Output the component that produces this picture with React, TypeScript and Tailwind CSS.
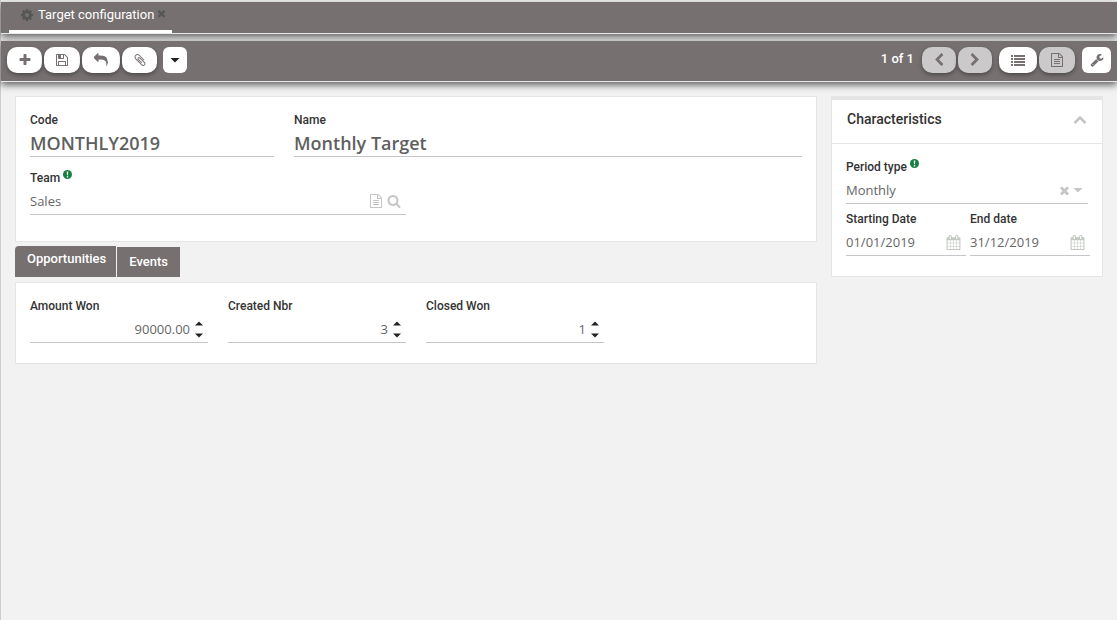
import React, { useState } from "react";

const paths = {
  cog: "M1152 896q0-106-75-181t-181-75-181 75-75 181 75 181 181 75 181-75 75-181zm512-109v222q0 12-8 23t-20 13l-185 28q-19 54-39 91 35 50 107 138 10 12 10 25t-9 23q-27 37-99 108t-94 71q-12 0-26-9l-138-108q-44 23-91 38-16 136-29 186-7 28-36 28h-222q-14 0-24.5-8.5t-11.5-21.5l-28-184q-49-16-90-37l-141 107q-10 9-25 9-14 0-25-11-126-114-165-168-7-10-7-23 0-12 8-23 15-21 51-66.5t54-70.5q-27-50-41-99l-183-27q-13-2-21-12.5t-8-23.5v-222q0-12 8-23t19-13l186-28q14-46 39-92-40-57-107-138-10-12-10-24 0-10 9-23 26-36 98.5-107.5t94.5-71.5q13 0 26 10l138 107q44-23 91-38 16-136 29-186 7-28 36-28h222q14 0 24.5 8.5t11.5 21.5l28 184q49 16 90 37l142-107q9-9 24-9 13 0 25 10 129 119 165 170 7 8 7 22 0 12-8 23-15 21-51 66.5t-54 70.5q26 50 41 98l183 28q13 2 21 12.5t8 23.5z",
  times: "M1490 1322q0 40-28 68l-136 136q-28 28-68 28t-68-28l-294-294-294 294q-28 28-68 28t-68-28l-136-136q-28-28-28-68t28-68l294-294-294-294q-28-28-28-68t28-68l136-136q28-28 68-28t68 28l294 294 294-294q28-28 68-28t68 28l136 136q28 28 28 68t-28 68l-294 294 294 294q28 28 28 68z",
  plus: "M1600 736v192q0 40-28 68t-68 28h-416v416q0 40-28 68t-68 28h-192q-40 0-68-28t-28-68v-416h-416q-40 0-68-28t-28-68v-192q0-40 28-68t68-28h416v-416q0-40 28-68t68-28h192q40 0 68 28t28 68v416h416q40 0 68 28t28 68z",
  save: "M512 1536h768v-384h-768v384zm896 0h128v-896q0-14-10-38.5t-20-34.5l-281-281q-10-10-34-20t-39-10v416q0 40-28 68t-68 28h-576q-40 0-68-28t-28-68v-416h-128v1280h128v-416q0-40 28-68t68-28h832q40 0 68 28t28 68v416zm-384-928v-320q0-13-9.5-22.5t-22.5-9.5h-192q-13 0-22.5 9.5t-9.5 22.5v320q0 13 9.5 22.5t22.5 9.5h192q13 0 22.5-9.5t9.5-22.5zm640 32v928q0 40-28 68t-68 28h-1344q-40 0-68-28t-28-68v-1344q0-40 28-68t68-28h928q40 0 88 20t76 48l280 280q28 28 48 76t20 88z",
  reply: "M1792 1120q0 166-127 451-3 7-10.5 24t-13.5 30-13 22q-12 17-28 17-15 0-23.5-10t-8.5-25q0-9 2.5-26.5t2.5-23.5q5-68 5-123 0-112-19.5-200.5t-54-153-89-111.5-117-77-145.5-48-166.5-25.5-186.5-7.5h-224v256q0 26-19 45t-45 19-45-19l-512-512q-19-19-19-45t19-45l512-512q19-19 45-19t45 19 19 45v256h224q713 0 875 403 53 134 53 333z",
  clip: "M1596 1385q0 117-79 196t-196 79q-135 0-235-100l-777-776q-113-115-113-271 0-159 110-270t269-111q158 0 273 113l605 606q10 10 10 22 0 16-30.5 46.5t-46.5 30.5q-13 0-23-10l-606-607q-79-77-181-77-106 0-179 75t-73 181q0 105 76 181l776 777q63 63 145 63 64 0 106-42t42-106q0-82-63-145l-581-581q-26-24-60-24-29 0-48 19t-19 48q0 32 25 59l410 410q10 10 10 22 0 16-31 47t-47 31q-12 0-22-10l-410-410q-63-61-63-149 0-82 57-139t139-57q88 0 149 63l581 581q100 98 100 235z",
  left: "M1427 301l-531 531 531 531q19 19 19 45t-19 45l-166 166q-19 19-45 19t-45-19l-742-742q-19-19-19-45t19-45l742-742q19-19 45-19t45 19l166 166q19 19 19 45t-19 45z",
  right: "M1363 877l-742 742q-19 19-45 19t-45-19l-166-166q-19-19-19-45t19-45l531-531-531-531q-19-19-19-45t19-45l166-166q19-19 45-19t45 19l742 742q19 19 19 45t-19 45z",
  up: "M1683 1331l-166 165q-19 19-45 19t-45-19l-531-531-531 531q-19 19-45 19t-45-19l-166-165q-19-19-19-45.5t19-45.5l742-741q19-19 45-19t45 19l742 741q19 19 19 45.5t-19 45.5z",
  list: "M0 256h256v240H0zM384 256h1408v240H384zM0 640h256v240H0zM384 640h1408v240H384zM0 1024h256v240H0zM384 1024h1408v240H384zM0 1408h256v240H0zM384 1408h1408v240H384z",
  file: "M1596 380q28 28 48 76t20 88v1152q0 40-28 68t-68 28h-1344q-40 0-68-28t-28-68v-1600q0-40 28-68t68-28h896q40 0 88 20t76 48zm-444-244v376h376q-10-29-22-41l-313-313q-12-12-41-22zm384 1528v-1024h-416q-40 0-68-28t-28-68v-416h-768v1536h1280zm-1024-864q0-14 9-23t23-9h704q14 0 23 9t9 23v64q0 14-9 23t-23 9h-704q-14 0-23-9t-9-23v-64zm736 224q14 0 23 9t9 23v64q0 14-9 23t-23 9h-704q-14 0-23-9t-9-23v-64q0-14 9-23t23-9h704zm0 256q14 0 23 9t9 23v64q0 14-9 23t-23 9h-704q-14 0-23-9t-9-23v-64q0-14 9-23t23-9h704z",
  wrench: "M448 1472q0-26-19-45t-45-19-45 19-19 45 19 45 45 19 45-19 19-45zm644-420l-682 682q-37 37-90 37-52 0-91-37l-106-108q-38-36-38-90 0-53 38-91l681-681q39 98 114.5 173.5t173.5 114.5zm634-435q0 39-23 106-47 134-164.5 217.5t-258.5 83.5q-185 0-316.5-131.5t-131.5-316.5 131.5-316.5 316.5-131.5q58 0 121.5 16.5t107.5 46.5q16 11 16 28t-16 28l-293 169v224l193 107q5-3 79-48.5t135.5-81 70.5-35.5q15 0 23.5 10t8.5 25z",
  search: "M1216 832q0-185-131.5-316.5t-316.5-131.5-316.5 131.5-131.5 316.5 131.5 316.5 316.5 131.5 316.5-131.5 131.5-316.5zm512 832q0 52-38 90t-90 38q-54 0-90-38l-343-342q-179 124-399 124-143 0-273.5-55.5t-225-150-150-225-55.5-273.5 55.5-273.5 150-225 225-150 273.5-55.5 273.5 55.5 225 150 150 225 55.5 273.5q0 220-124 399l343 343q37 37 37 90z",
  calendar: "M192 1664h288v-288h-288v288zm352 0h320v-288h-320v288zm-352-352h288v-320h-288v320zm352 0h320v-320h-320v320zm-352-384h288v-288h-288v288zm736 736h320v-288h-320v288zm-384-736h320v-288h-320v288zm768 736h288v-288h-288v288zm-384-352h320v-320h-320v320zm-352-864v-288q0-13-9.5-22.5t-22.5-9.5h-64q-13 0-22.5 9.5t-9.5 22.5v288q0 13 9.5 22.5t22.5 9.5h64q13 0 22.5-9.5t9.5-22.5zm736 864h288v-320h-288v320zm-384-384h320v-288h-320v288zm384 0h288v-288h-288v288zm32-480v-288q0-13-9.5-22.5t-22.5-9.5h-64q-13 0-22.5 9.5t-9.5 22.5v288q0 13 9.5 22.5t22.5 9.5h64q13 0 22.5-9.5t9.5-22.5zm384-64v1280q0 52-38 90t-90 38h-1408q-52 0-90-38t-38-90v-1280q0-52 38-90t90-38h128v-96q0-66 47-113t113-47h64q66 0 113 47t47 113v96h384v-96q0-66 47-113t113-47h64q66 0 113 47t47 113v96h128q52 0 90 38t38 90z",
  caret: "M320 640h1152l-576 576z",
};

function Icon({ name, className }: { name: keyof typeof paths; className: string }) {
  return (
    <svg viewBox="0 0 1792 1792" fill="currentColor" aria-hidden="true" className={`shrink-0 ${className}`}>
      <path d={paths[name]} />
    </svg>
  );
}

function Required() {
  return (
    <svg viewBox="0 0 12 12" aria-hidden="true" className="h-[9px] w-[9px] shrink-0">
      <circle cx="6" cy="6" r="6" fill="#15803f" />
      <path d="M5 2h2l-.3 5H5.300zM5.100 8h1.800v2H5.100z" fill="#fff" />
    </svg>
  );
}

const label = "flex gap-[3px] font-['Roboto',sans-serif] text-xs leading-4 font-medium text-[#333]";
const line = "mt-0.5 flex h-[27px] items-center border-b border-[#c6c6c6]";
const value = "w-full min-w-0 bg-transparent pt-0.5 font-['Open_Sans',sans-serif] text-[13px] text-[#666] outline-none";
const title = "w-full min-w-0 bg-transparent font-['Open_Sans',sans-serif] text-lg font-semibold text-[#5f5f5f] outline-none";
const pill = "flex h-[26px] items-center justify-center rounded-[10px] shadow-[0_2px_4px_rgba(0,0,0,0.35)]";
const bar = "border-b border-[#e8e8e8] bg-[#777070] shadow-[0_3px_7px_rgba(0,0,0,0.6)]";

function NumberField({ id, text, initial, decimals }: { id: string; text: string; initial: number; decimals: number }) {
  const [n, setN] = useState(initial);
  return (
    <div className="w-[178px]">
      <label htmlFor={id} className={label}>{text}</label>
      <div className={`${line} gap-[5px] pr-[5px]`}>
        <input id={id} className={`${value} text-right`} value={n.toFixed(decimals)} onChange={(e) => setN(Number(e.target.value) || 0)} />
        <span className="flex shrink-0 flex-col gap-[7px] text-[#222]">
          <button type="button" aria-label={`Increase ${text}`} onClick={() => setN(n + 1)}>
            <svg viewBox="0 0 8 5" className="block h-[5px] w-2" fill="currentColor"><path d="M0 4.500h8L4 .5z" /></svg>
          </button>
          <button type="button" aria-label={`Decrease ${text}`} onClick={() => setN(n - 1)}>
            <svg viewBox="0 0 8 5" className="block h-[5px] w-2" fill="currentColor"><path d="M0 .5h8L4 4.500z" /></svg>
          </button>
        </span>
      </div>
    </div>
  );
}

function DateField({ id, text, initial }: { id: string; text: string; initial: string }) {
  return (
    <div className="min-w-0 flex-1">
      <label htmlFor={id} className={label}>{text}</label>
      <div className={`${line} pr-[5px]`}>
        <input id={id} className={value} defaultValue={initial} />
        <button type="button" aria-label={`Pick ${text}`} className="text-[#c3c9c0]"><Icon name="calendar" className="h-[15px] w-[15px]" /></button>
      </div>
    </div>
  );
}

export default function App() {
  return (
    <div className="min-h-screen border-l border-[#ccc] bg-[#f2f2f2] pt-0.5">
      <header className={`${bar} flex h-8 items-stretch pl-2`}>
        <div className="flex items-center border-b-[3px] border-white pr-[5px] pb-0.5 pl-[11px] font-['Roboto',sans-serif]">
          <Icon name="cog" className="mr-1 h-[14px] w-[14px] text-[#555]" />
          <a href="#" className="text-[13px] text-white">Target configuration</a>
          <button type="button" aria-label="Close tab" className="mb-1 ml-0.5 text-[#555]"><Icon name="times" className="h-[11px] w-[11px]" /></button>
        </div>
      </header>

      <div className={`${bar} mt-[7px] flex h-[41px] items-center px-1.5 pb-0.5 text-[#777070]`}>
        <div className="flex gap-0.5">
          <button type="button" aria-label="New" className={`${pill} w-[35px] bg-white`}><Icon name="plus" className="h-[14px] w-[14px]" /></button>
          <button type="button" aria-label="Save" className={`${pill} w-9 bg-white`}><Icon name="save" className="h-[14px] w-[14px]" /></button>
          <button type="button" aria-label="Undo" className={`${pill} w-[38px] bg-white`}><Icon name="reply" className="h-[14px] w-[14px]" /></button>
          <button type="button" aria-label="Attachments" className={`${pill} w-[35px] bg-white`}><Icon name="clip" className="h-[14px] w-[14px]" /></button>
        </div>
        <button type="button" aria-label="More actions" className="ml-1.5 flex h-[26px] w-6 items-center justify-center rounded-md bg-white text-[#222]"><Icon name="caret" className="h-[14px] w-[14px]" /></button>
        <span className="mr-2 mb-0.5 ml-auto font-['Roboto',sans-serif] text-[13px] font-medium text-white">1 of 1</span>
        <div className="flex gap-0.5">
          <button type="button" aria-label="Previous" className={`${pill} w-[34px] bg-[#cbc9c9]`}><Icon name="left" className="h-[14px] w-[14px]" /></button>
          <button type="button" aria-label="Next" className={`${pill} w-[34px] bg-[#cbc9c9]`}><Icon name="right" className="h-[14px] w-[14px]" /></button>
        </div>
        <div className="ml-[7px] flex gap-0.5">
          <button type="button" aria-label="List view" className={`${pill} w-[38px] bg-white`}><Icon name="list" className="h-[14px] w-[14px]" /></button>
          <button type="button" aria-label="Form view" className={`${pill} w-9 bg-[#cbc9c9]`}><Icon name="file" className="h-[14px] w-[14px]" /></button>
        </div>
        <button type="button" aria-label="Tools" className="ml-[7px] flex h-[26px] w-[29px] items-center justify-center rounded-md bg-white"><Icon name="wrench" className="h-[14px] w-[14px]" /></button>
      </div>

      <main className="flex items-start gap-[14px] px-[14px] pt-[14px]">
        <div className="min-w-0 flex-1">
          <section className="border border-[#e5e5e5] bg-white px-[14px] pt-[15px] pb-[26px]">
            <div className="flex gap-5">
              <div className="w-[244px]">
                <label htmlFor="code" className={label}>Code</label>
                <div className={line}><input id="code" className={title} defaultValue="MONTHLY2019" /></div>
              </div>
              <div className="min-w-0 flex-1">
                <label htmlFor="name" className={label}>Name</label>
                <div className={line}><input id="name" className={title} defaultValue="Monthly Target" /></div>
              </div>
            </div>
            <div className="mt-[13px] w-[376px]">
              <label htmlFor="team" className={label}>Team <Required /></label>
              <div className={`${line} gap-1 pr-[5px] text-[#c6c6c6]`}>
                <input id="team" className={value} defaultValue="Sales" />
                <button type="button" aria-label="Open team"><Icon name="file" className="h-[14px] w-[14px]" /></button>
                <button type="button" aria-label="Search team"><Icon name="search" className="h-[14px] w-[14px]" /></button>
              </div>
            </div>
          </section>

          <div role="tablist" className="mt-1 flex items-end gap-px font-['Roboto',sans-serif] text-[13px] font-medium text-white">
            <button type="button" role="tab" aria-selected="true" className="h-[31px] rounded-tl bg-[#777070] pr-2.5 pb-1.5 pl-3">Opportunities</button>
            <button type="button" role="tab" aria-selected="false" className="h-[30px] bg-[#777070] px-3">Events</button>
          </div>

          <section role="tabpanel" className="mt-[5px] flex gap-5 border border-[#e5e5e5] bg-white px-[14px] pt-[15px] pb-5">
            <NumberField id="amount" text="Amount Won" initial={90000} decimals={2} />
            <NumberField id="created" text="Created Nbr" initial={3} decimals={0} />
            <NumberField id="closed" text="Closed Won" initial={1} decimals={0} />
          </section>
        </div>

        <aside className="w-[272px] shrink-0 border border-t-4 border-[#e5e5e5] bg-white">
          <div className="flex h-[44px] items-center justify-between border-b border-[#e5e5e5] px-[15px] pb-[5px]">
            <h2 className="font-['Roboto',sans-serif] text-sm font-medium text-[#333]">Characteristics</h2>
            <button type="button" aria-label="Collapse" className="text-[#c6c6c6]"><Icon name="up" className="h-[14px] w-[14px]" /></button>
          </div>
          <div className="px-[14px] pt-[15px] pb-5">
            <label htmlFor="period" className={label}>Period type <Required /></label>
            <div className={`${line} pr-[3px] text-[#c6c6c6]`}>
              <input id="period" role="combobox" aria-expanded="false" className={value} defaultValue="Monthly" />
              <button type="button" aria-label="Clear"><Icon name="times" className="h-[13px] w-[13px]" /></button>
              <button type="button" aria-label="Show options"><Icon name="caret" className="h-[14px] w-[14px]" /></button>
            </div>
            <div className="mt-[7px] -mr-0.5 flex gap-1">
              <DateField id="start" text="Starting Date" initial="01/01/2019" />
              <DateField id="end" text="End date" initial="31/12/2019" />
            </div>
          </div>
        </aside>
      </main>
    </div>
  );
}
